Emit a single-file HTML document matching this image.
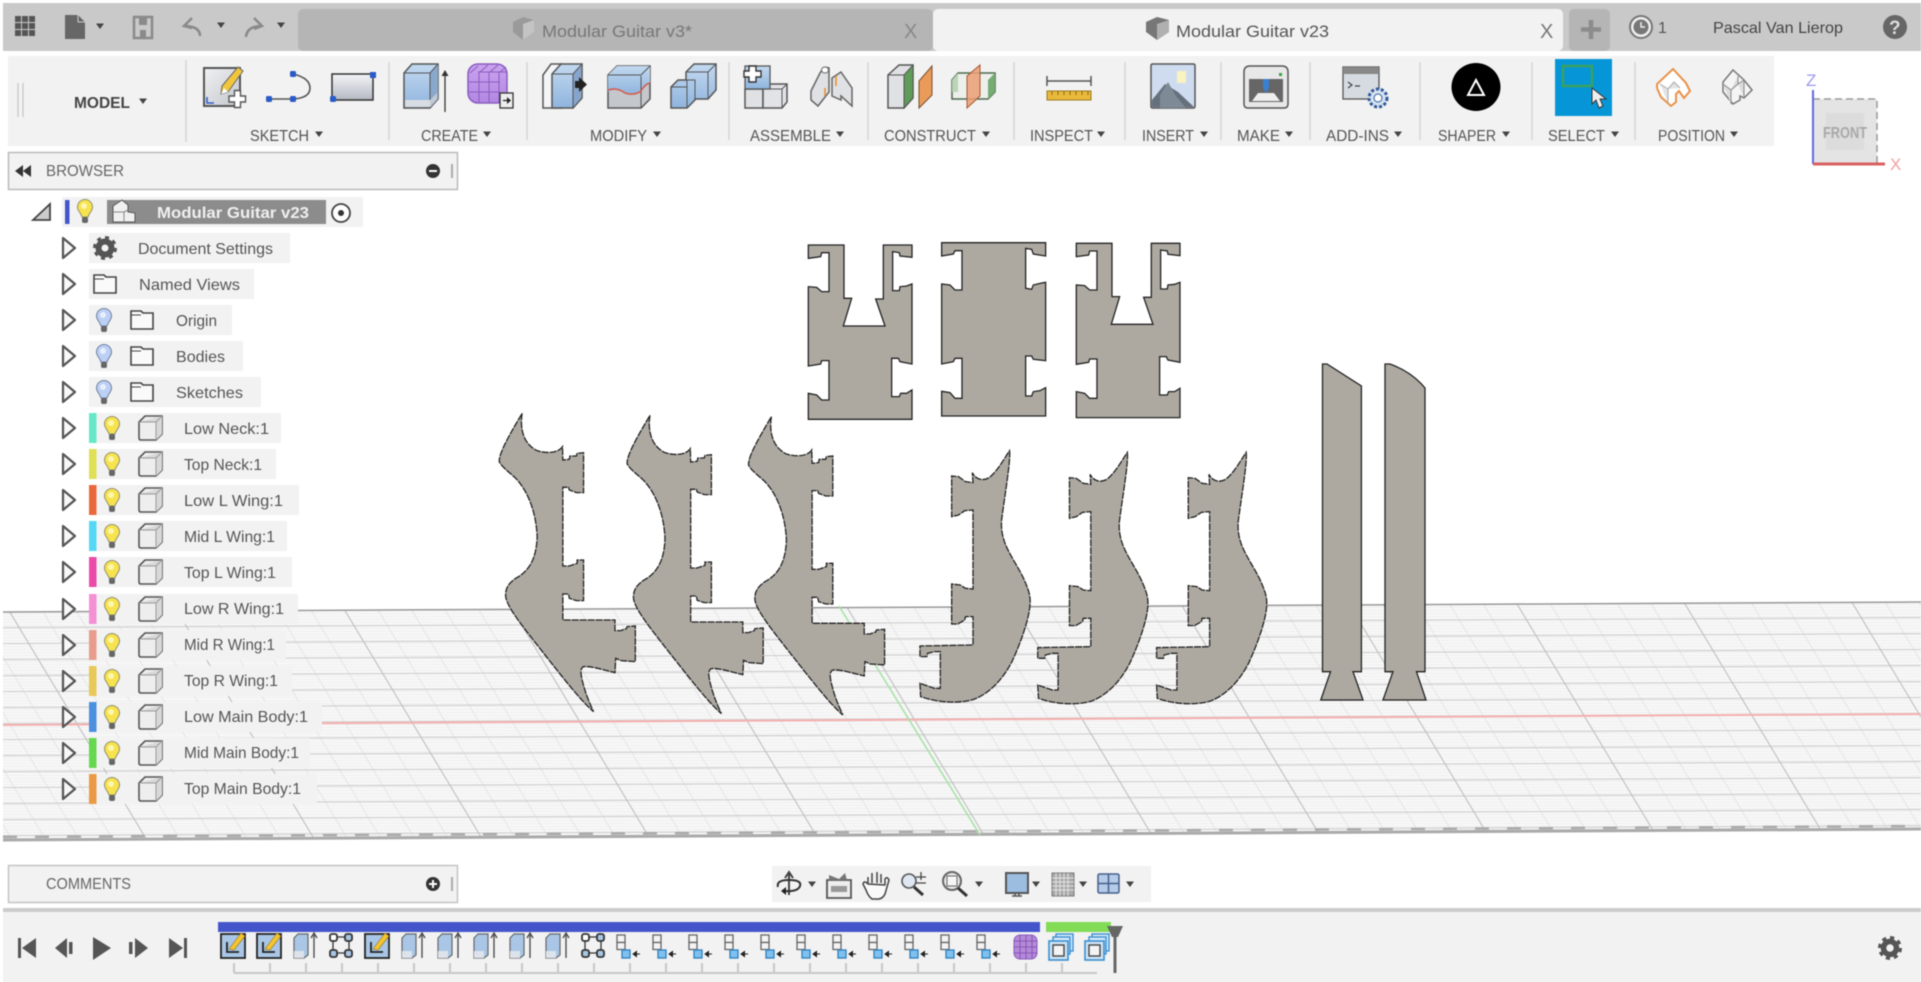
<!DOCTYPE html>
<html><head><meta charset="utf-8"><title>Modular Guitar v23</title>
<style>
html,body{margin:0;padding:0;background:#fff;width:1921px;height:982px;overflow:hidden}
svg{display:block;filter:blur(.45px);font-family:"Liberation Sans",sans-serif}
.s{vector-effect:non-scaling-stroke}
text{fill:#555}
</style></head><body>
<svg width="1921" height="982" viewBox="0 0 1921 982" xmlns="http://www.w3.org/2000/svg">
<defs>
<linearGradient id="rg" x1="0" y1="0" x2="0" y2="1"><stop offset="0" stop-color="#f4f5f7"/><stop offset="1" stop-color="#b4b9c2"/></linearGradient>
<linearGradient id="bl" x1="0" y1="0" x2="0" y2="1"><stop offset="0" stop-color="#c3d9f0"/><stop offset="1" stop-color="#8fb4de"/></linearGradient>
<linearGradient id="gr" x1="0" y1="0" x2="1" y2="1"><stop offset="0" stop-color="#f0f1f3"/><stop offset="1" stop-color="#c3c6cc"/></linearGradient>
<linearGradient id="pu" x1="0" y1="0" x2="0" y2="1"><stop offset="0" stop-color="#c9a4ee"/><stop offset="1" stop-color="#b286e2"/></linearGradient>
<pattern id="ph" width="10" height="3" patternUnits="userSpaceOnUse"><rect y="1" width="10" height="1" fill="#efefef"/></pattern>
<pattern id="ph2" width="10" height="16" patternUnits="userSpaceOnUse" patternTransform="translate(0,611) rotate(-.3)"><rect y="0" width="10" height="1.200" fill="#d0d0d0"/></pattern>
<pattern id="pd" width="33.600" height="20" patternUnits="userSpaceOnUse" patternTransform="translate(1517,605) skewX(31)"><rect width="1" height="20" fill="#e2e2e2"/></pattern>
<pattern id="pd2" width="168" height="20" patternUnits="userSpaceOnUse" patternTransform="translate(1517,605) skewX(31)"><rect width="1.200" height="20" fill="#bdbdbd"/></pattern>
<g id="bulb"><path d="M-3,6C-4,2-7.500,0-7.500-4A7.500,7.500 0 1 1 7.500-4C7.500,0 4,2 3,6Z" fill="#f7e34e" stroke="#8f8f70"/><circle cx="-1" cy="-5" r="3" fill="#fdf6b0"/><rect x="-3" y="6" width="6" height="6" rx="2" fill="#666"/></g>
<g id="bulbb"><path d="M-3,6C-4,2-7.500,0-7.500-4A7.500,7.500 0 1 1 7.500-4C7.500,0 4,2 3,6Z" fill="#bcd0f5" stroke="#6f7f9f"/><circle cx="-1" cy="-5" r="3" fill="#e8effc"/><rect x="-3" y="6" width="6" height="6" rx="2" fill="#666"/></g>
<g id="cube"><path d="M-11-6L-5-12H12V6L6,12H-9Q-11,12-11,10Z" fill="#eee" stroke="#555" stroke-width="1.600"/><path d="M-11-6H6V12L12,6V-12Z" fill="#d8d8d8" stroke="none"/><path d="M-11-6H6V12M6-6L12-12" fill="none" stroke="#999"/></g>
<g id="folder"><path d="M-11-9H-1L1-7H11V9H-11Z" fill="#fafafa" stroke="#444" stroke-width="1.600"/><path d="M-11-5H-1" stroke="#444" fill="none"/></g>
<path id="exp" d="M-6-10L6,0-6,10Z" fill="#f8f8f8" stroke="#555" stroke-width="2.200" stroke-linejoin="round"/>
<path id="dd" d="M-4-2.500H4L0,3Z" fill="#444"/>
<path id="wingL" class="s" d="M118,40C112,80 118,130 160,152C190,162 220,158 231,140L232,180L250,178L252,168L270,168L272,160L290,158L290,278L270,278L250,270L248,262L232,262L232,498L250,498L272,490L272,480L290,480L290,602L270,602L250,595L248,582L232,582L232,660L378,660L378,692L394,692L410,686L412,680L435,678L435,785L395,782L380,775L378,818C340,808 310,798 290,800C280,805 282,820 286,840C295,880 305,905 318,935C280,900 230,830 160,735C120,680 75,620 72,590C70,565 80,550 100,535C135,515 158,480 160,410C158,350 140,280 100,235C80,215 60,200 54,185C52,160 85,100 118,40Z"/>
<path id="wingR" class="s" d="M318,92C322,120 305,220 295,300C293,330 298,350 305,370C320,410 350,450 365,490C373,510 378,525 378,545C378,590 350,670 325,725C295,785 255,822 215,838C170,852 110,848 60,830L58,790L80,798L100,805L117,805L117,695L100,695L80,700L78,710L58,710L58,678L212,675L212,590L190,590L188,600L168,612L150,612L150,492L175,495L190,505L212,507L212,270L188,272L170,285L150,290L150,168L170,170L190,185L212,188L210,158C220,178 240,185 260,172C285,150 300,120 318,92Z"/>
<path id="partU" class="s" d="M85,45H192V205H215L190,288H315L287,207H310V45H396V82L360,78L358,68L338,65V182L358,182L360,170L380,168L396,162V402L360,395L355,385H335V500L358,500L362,490L380,490L396,480V568H85V490L110,495L125,510H147V392H125L122,402L85,408V170L110,172L125,185H147V68H125L122,80L85,85Z"/>
<g id="tsk"><rect x="-12" y="-11" width="24" height="24" fill="#a9c6e6" stroke="#222" stroke-width="1.800"/><path d="M-6-3V7H6" fill="none" stroke="#222" stroke-width="1.800"/><path d="M-4,4L8-12L12-9L1,5Z" fill="#f4c430" stroke="#8a7020" stroke-width=".6"/></g>
<g id="tex"><path d="M-11-7L-7-11H3V10L-1,13H-11Z" fill="#a9c6e6" stroke="#666" stroke-width="1.200"/><path d="M-11,6H-1V13H-11Z" fill="#dde3ea"/><path d="M9,13V-10M6-7L9-12L12-7" fill="none" stroke="#444" stroke-width="1.300"/></g>
<g id="tpa"><g fill="#fff" stroke="#333" stroke-width="1.800"><rect x="-11" y="-11" width="7" height="7" rx="2"/><rect x="4" y="-11" width="7" height="7" rx="2" fill="#a9c6e6"/><rect x="-11" y="5" width="7" height="7" rx="2" fill="#a9c6e6"/><rect x="4" y="5" width="7" height="7" rx="2" fill="#a9c6e6"/></g><path d="M-4-8H4M-8-4V5M-4,8H4M8-4V5" stroke="#333" stroke-width="1.300" fill="none"/></g>
<g id="tjo"><rect x="-12" y="-10" width="8" height="7.500" fill="#f4f4f4" stroke="#666" stroke-width="1.300"/><rect x="-12" y="-2.500" width="8" height="7" fill="#f4f4f4" stroke="#666" stroke-width="1.300"/><rect x="-7" y="5" width="8" height="8" fill="#7fc1ee" stroke="#2d7fc0" stroke-width="1.300"/><path d="M4,9H11M4,9L7.500,6.500V11.500Z" stroke="#222" fill="#222"/></g>
<g id="tco"><rect x="-4" y="-13" width="17" height="17" fill="#d9ebf9" stroke="#3a8fd0" stroke-width="1.400"/><rect x="-7" y="-10" width="17" height="17" fill="#d9ebf9" stroke="#3a8fd0" stroke-width="1.400"/><rect x="-11" y="-6" width="19" height="19" fill="#cfe4f5" stroke="#3a8fd0" stroke-width="1.600"/><rect x="-7" y="-2" width="11" height="11" fill="#f4f4f4" stroke="#444" stroke-width="1.400"/></g>
</defs>

<!-- viewport floor -->
<polygon points="3,612 1921,602 1921,830 3,841" fill="#f8f8f8"/>
<clipPath id="fc"><polygon points="3,612 1921,602 1921,830 3,841"/></clipPath>
<g clip-path="url(#fc)">
<rect x="0" y="600" width="1921" height="245" fill="url(#ph)"/>
<rect x="0" y="600" width="1921" height="245" fill="url(#pd)"/>
<rect x="0" y="600" width="1921" height="245" fill="url(#ph2)"/>
<rect x="0" y="600" width="1921" height="245" fill="url(#pd2)"/>
</g>
<path d="M3,612L1921,602" stroke="#999" stroke-width="1.500"/>
<path d="M3,840L1921,829" stroke="#aaa" stroke-width="3"/>
<path d="M3,837L1921,826" stroke="#aaa" stroke-width="2.500" stroke-dasharray="14 18"/>
<path d="M3,725L1921,714" stroke="#f5b0b0" stroke-width="2"/>
<path d="M839,606L980,835" stroke="#a8e2a8" stroke-width="1.600"/>

<!-- top parts -->
<g transform="translate(780,230) scale(.3333)" fill="#ada9a1" stroke="#222" stroke-width="1.300">
<use href="#partU"/>
<path class="s" d="M485,38H797V78L760,72L755,58L737,55V175L755,178L760,165L780,160L797,157V392L760,388L755,378L737,378V498L755,498L760,485L780,482L797,473V558H485V484L510,488L525,505L546,505V385L525,385L520,395L485,402V162L510,165L525,180L546,180V62L525,62L520,72L485,78Z"/>
<use href="#partU" x="804" y="-5"/>
</g>
<!-- left wings -->
<g transform="translate(480,400) scale(.3571,.3333)" fill="#ada9a1" stroke="#222" stroke-width="1.300" stroke-dasharray="7 1">
<use href="#wingL"/><use href="#wingL" x="358" y="6"/><use href="#wingL" x="698" y="10"/>
</g>
<!-- right wings -->
<g transform="translate(900,420) scale(.3444,.3333)" fill="#ada9a1" stroke="#222" stroke-width="1.300" stroke-dasharray="7 1">
<use href="#wingR"/><use href="#wingR" x="342" y="5"/><use href="#wingR" x="687" y="5"/>
</g>
<!-- neck bars -->
<path d="M1322.500,364H1327L1361.400,386V671.700H1353L1363,700H1320.800L1330.500,671.700H1322.500Z" fill="#ada9a1" stroke="#222" stroke-width="1.300"/>
<path d="M1385,364H1390Q1412,372 1425,388V671.700H1416.500L1426,700H1383L1393,671.700H1385Z" fill="#ada9a1" stroke="#222" stroke-width="1.300"/>

<!-- top bar -->
<rect x="3" y="3" width="1918" height="48" fill="#c9c9c9"/>
<rect x="298" y="9" width="635" height="42" rx="5" fill="#b5b5b5"/>
<rect x="933" y="9" width="630" height="42" rx="5" fill="#f2f2f2"/>
<rect x="1569" y="9" width="41" height="42" rx="5" fill="#b5b5b5"/>
<g fill="#555"><rect x="15" y="16" width="6" height="6"/><rect x="22" y="16" width="6" height="6"/><rect x="29" y="16" width="6" height="6"/><rect x="15" y="23" width="6" height="6"/><rect x="22" y="23" width="6" height="6"/><rect x="29" y="23" width="6" height="6"/><rect x="15" y="30" width="6" height="6"/><rect x="22" y="30" width="6" height="6"/><rect x="29" y="30" width="6" height="6"/></g>
<path d="M65,15H78L85,22V39H65Z" fill="#666"/><path d="M78,15V22H85" fill="none" stroke="#ccc"/>
<use href="#dd" x="100" y="26"/>
<path d="M134,17H152V38H134Z" fill="none" stroke="#8a8a8a" stroke-width="2.500"/><rect x="139" y="17" width="8" height="8" fill="#8a8a8a"/><rect x="140" y="30" width="6" height="8" fill="#8a8a8a"/>
<path d="M192,18L184,26L192,28M184,26Q200,26 200,36" fill="none" stroke="#8a8a8a" stroke-width="2.500"/>
<use href="#dd" x="221" y="25"/>
<path d="M254,18L262,26L254,29M262,26Q247,26 246,37" fill="none" stroke="#8a8a8a" stroke-width="2.500"/>
<use href="#dd" x="281" y="25"/>
<path d="M513,22L523,17L534,20V32L523,40L513,32Z" fill="#9a9a9a"/><path d="M523,24V40L534,32V20Z" fill="#c4c4c4"/>
<text x="542" y="37" font-size="17" textLength="150" lengthAdjust="spacingAndGlyphs" style="fill:#777">Modular Guitar v3*</text>
<text x="904" y="38" font-size="20" style="fill:#888">X</text>
<path d="M1146,22L1157,17L1169,20V32L1157,40L1146,32Z" fill="#777"/><path d="M1157,24V40L1169,32V20Z" fill="#b0b0b0"/>
<text x="1176" y="37" font-size="17" textLength="153" lengthAdjust="spacingAndGlyphs">Modular Guitar v23</text>
<text x="1540" y="38" font-size="20" style="fill:#777">X</text>
<path d="M1591,20V39M1581,29.500H1601" stroke="#8c8c8c" stroke-width="4.500"/>
<circle cx="1641" cy="27" r="11" fill="#eee" stroke="#777" stroke-width="2"/><circle cx="1641" cy="27" r="7.500" fill="#777"/><path d="M1641,22V27H1645" stroke="#eee" fill="none" stroke-width="1.500"/>
<text x="1658" y="33" font-size="16">1</text>
<text x="1713" y="33" font-size="16" textLength="130" lengthAdjust="spacingAndGlyphs" style="fill:#444">Pascal Van Lierop</text>
<circle cx="1895" cy="27" r="12" fill="#666"/><text x="1889" y="34" font-size="19" font-weight="bold" style="fill:#ddd">?</text>

<!-- toolbar -->
<rect x="8" y="56" width="1766" height="90" fill="#f2f2f2"/>
<path d="M18,83V117M23,83V117" stroke="#c4c4c4" stroke-width="1.200"/>
<path d="M186,60V142M389,62V140M527,62V140M729,62V140M868,62V140M1014,62V140M1125,62V140M1221,62V140M1310,62V140M1420,62V140M1532,62V140M1635,62V140" stroke="#d6d6d6" stroke-width="1.500"/>
<text x="74" y="108" font-size="16" font-weight="bold" textLength="56" lengthAdjust="spacingAndGlyphs" style="fill:#444">MODEL</text><use href="#dd" x="143" y="101"/>
<text x="250" y="141" font-size="16" textLength="59" lengthAdjust="spacingAndGlyphs">SKETCH</text><use href="#dd" x="319" y="134"/>
<text x="421" y="141" font-size="16" textLength="57" lengthAdjust="spacingAndGlyphs">CREATE</text><use href="#dd" x="487" y="134"/>
<text x="590" y="141" font-size="16" textLength="57" lengthAdjust="spacingAndGlyphs">MODIFY</text><use href="#dd" x="657" y="134"/>
<text x="750" y="141" font-size="16" textLength="81" lengthAdjust="spacingAndGlyphs">ASSEMBLE</text><use href="#dd" x="840" y="134"/>
<text x="884" y="141" font-size="16" textLength="92" lengthAdjust="spacingAndGlyphs">CONSTRUCT</text><use href="#dd" x="986" y="134"/>
<text x="1030" y="141" font-size="16" textLength="63" lengthAdjust="spacingAndGlyphs">INSPECT</text><use href="#dd" x="1101" y="134"/>
<text x="1142" y="141" font-size="16" textLength="52" lengthAdjust="spacingAndGlyphs">INSERT</text><use href="#dd" x="1204" y="134"/>
<text x="1237" y="141" font-size="16" textLength="43" lengthAdjust="spacingAndGlyphs">MAKE</text><use href="#dd" x="1289" y="134"/>
<text x="1326" y="141" font-size="16" textLength="63" lengthAdjust="spacingAndGlyphs">ADD-INS</text><use href="#dd" x="1398" y="134"/>
<text x="1438" y="141" font-size="16" textLength="58" lengthAdjust="spacingAndGlyphs">SHAPER</text><use href="#dd" x="1506" y="134"/>
<text x="1548" y="141" font-size="16" textLength="57" lengthAdjust="spacingAndGlyphs">SELECT</text><use href="#dd" x="1615" y="134"/>
<text x="1658" y="141" font-size="16" textLength="67" lengthAdjust="spacingAndGlyphs">POSITION</text><use href="#dd" x="1734" y="134"/>
<!-- sketch icons -->
<rect x="204" y="68" width="36" height="38" fill="url(#gr)" stroke="#555" stroke-width="2"/>
<path d="M207,97V103H214" stroke="#3060c8" stroke-width="1.600" fill="none"/>
<path d="M222,86L238,67L243,71L228,92L221,94Z" fill="#f2c63c" stroke="#666"/><path d="M221,94L224,88L228,92Z" fill="#fff"/>
<path d="M229,96H234.500V90.500H240.500V96H245.500V102H240.500V107.500H234.500V102H229Z" fill="#fff" stroke="#555" stroke-width="1.400"/>
<path d="M269,99H293M293,74Q310,78 310,88Q310,98 293,99" fill="none" stroke="#555" stroke-width="1.600"/>
<g fill="#2a5ac8"><rect x="266" y="96" width="6" height="6" rx="1.500"/><rect x="290" y="96" width="6" height="6" rx="1.500"/><rect x="290" y="71" width="6" height="6" rx="1.500"/></g>
<rect x="332" y="74" width="41" height="26" fill="url(#rg)" stroke="#333" stroke-width="1.500"/>
<rect x="370" y="72" width="6" height="6" fill="#2a5ac8"/><rect x="330" y="96" width="6" height="6" rx="1.500" fill="#2a5ac8"/>
<!-- create -->
<path d="M404,73L412,64H438V99L430,108H404Z" fill="url(#bl)" stroke="#555" stroke-width="1.500"/><path d="M430,73L438,64V99L430,108Z" fill="#8aa8cc"/><path d="M404,73H430V108M430,73L438,64" fill="none" stroke="#555"/><path d="M405,100H430V107H405Z" fill="#d8dde3"/><path d="M430,100L437,93V99L430,107Z" fill="#c4c9d0"/>
<path d="M445,112V71" stroke="#333" stroke-width="1.300"/><path d="M441.500,76L445,70L448.500,76Z" fill="#333"/>
<rect x="468" y="64" width="39" height="39" rx="10" fill="url(#pu)" stroke="#8a5cc0" stroke-width="1.500"/>
<path d="M470,73L478,66M480,72L488,65M490,72L498,65M478,72H506M469,82H500M469,92H500M479,72V102M489,72V102M499,72V102M500,72L506,67" stroke="#8a5cc0" stroke-width="1" fill="none"/>
<rect x="500" y="93" width="13" height="15" fill="#eee" stroke="#333" stroke-width="1.300"/><path d="M503,100.500H508" stroke="#222" stroke-width="1.300"/><path d="M507,97L511,100.500L507,104Z" fill="#222"/>
<!-- modify -->
<path d="M543,75L551,64H562V108H543Z" fill="#f4f5f7" stroke="#555" stroke-width="1.500"/>
<path d="M552,74L561,64H582V98L573,108H552Z" fill="url(#bl)" stroke="#555" stroke-width="1.500"/><path d="M573,74L582,64V98L573,108Z" fill="#87a5cb" stroke="#555"/><path d="M552,74H573" stroke="#555"/>
<rect x="575" y="81" width="5" height="7" fill="#222"/><path d="M579,77L587,84.500L579,92Z" fill="#222"/>
<path d="M608,75L617,66H650V99L641,108H608Z" fill="#c4c7cc" stroke="#555" stroke-width="1.500"/>
<path d="M608,75L617,66H650V83Q645,84 641,90Q632,97 625,93Q615,87 608,92Z" fill="url(#bl)"/>
<path d="M641,76V108M608,75H641L650,66" fill="none" stroke="#555"/><path d="M608,90Q617,87 625,93Q634,96 641,91Q645,84 650,83" fill="none" stroke="#d85a48" stroke-width="1.500"/>
<path d="M671,87L678,80H686V72L694,64H716V90L708,99H695V100L687,108H671Z" fill="url(#bl)" stroke="#555" stroke-width="1.500"/><path d="M671,87H687V108M687,87V80M686,80H695V99M686,72H708V99M708,72L716,64" fill="none" stroke="#555" stroke-width="1"/>
<!-- assemble -->
<path d="M745,89H763V108H745Z" fill="#dfe1e4" stroke="#555" stroke-width="1.500"/><path d="M763,89L769,84H787V102L782,108H763Z" fill="#e1e3e6" stroke="#555" stroke-width="1.500"/><path d="M763,89H782V108M782,89L787,84" fill="none" stroke="#555"/>
<rect x="745" y="66" width="25" height="23" fill="url(#bl)" stroke="#555" stroke-width="1.300"/>
<path d="M744,71H749V66H756V71H761V77H756V82H749V77H744Z" fill="#fff" stroke="#333" stroke-width="1.400"/>
<path d="M811,91L820,73Q824,66 829,68V92L818,106L811,100Z" fill="#dfe1e4" stroke="#666" stroke-width="1.500"/><ellipse cx="825" cy="70" rx="3.500" ry="3" fill="#fff" stroke="#666"/>
<path d="M832,78L841,72L852,88V106L841,96V100L832,96Z" fill="#dfe1e4" stroke="#666" stroke-width="1.500"/><path d="M825,88V96M836,76V86" stroke="#e8922e" stroke-width="1.600"/>
<!-- construct -->
<path d="M888,75L899,65H913V98L904,108H888Z" fill="#dfe1e4" stroke="#555" stroke-width="1.500"/><path d="M904,75L913,65V98L904,108Z" fill="#5f9c5a" stroke="#555"/><path d="M888,75H904" stroke="#555"/>
<path d="M919,81L932,66V95L919,108Z" fill="#ea9b5a" stroke="#7a5030"/>
<path d="M952,80L958,73H995V92L988,99H952Z" fill="#ecefec" stroke="#4c6a4c" stroke-width="1.500"/><path d="M988,80L995,73V92L988,99Z" fill="#76ab72"/><path d="M952,80L958,73V92H952Z" fill="#b9d4b6"/>
<path d="M967,76L980,65V96L967,108Z" fill="#eb9f76" fill-opacity=".85" stroke="#a8562f"/>
<!-- inspect -->
<path d="M1047,81H1091M1047,76V86M1091,76V86" stroke="#555" stroke-width="1.500" fill="none"/>
<rect x="1047" y="91" width="44" height="9" fill="#e9b93c" stroke="#9a7a20"/><path d="M1052,91V95M1058,91V95M1064,91V95M1070,91V95M1076,91V95M1082,91V95M1088,91V95" stroke="#8a6a10"/>
<!-- insert -->
<rect x="1151" y="64" width="44" height="44" rx="1.500" fill="#cfdcf0" stroke="#555" stroke-width="1.500"/>
<path d="M1152,100L1165,84L1178,92L1194,107H1152Z" fill="#66707c"/><path d="M1160,95L1168,82L1176,96L1186,108H1160Z" fill="#7e8a96"/><rect x="1177" y="71" width="9" height="12" fill="#f8f3c0"/>
<!-- make -->
<path d="M1244,72Q1244,66 1250,66H1282Q1288,66 1288,72V104Q1288,108 1284,108H1248Q1244,108 1244,104Z" fill="#e8e8e8" stroke="#555" stroke-width="1.500"/><rect x="1249" y="79" width="34" height="23" fill="#666"/><path d="M1263,79H1269V88L1266,93L1263,88Z" fill="#3a7fd0"/><path d="M1252,101L1258,93H1274L1280,101Z" fill="#eee"/><rect x="1279" y="73" width="3" height="3" fill="#3aa040"/>
<!-- add-ins -->
<rect x="1343" y="67" width="36" height="32" fill="#d6dbe2" stroke="#555" stroke-width="1.300"/><rect x="1343" y="67" width="36" height="7" fill="#888"/><path d="M1348,82L1352,85L1348,88M1355,86H1360" stroke="#444" fill="none" stroke-width="1.200"/>
<circle cx="1378" cy="98" r="9" fill="#d6e2f2" stroke="#2f5a9a" stroke-width="3" stroke-dasharray="3 2"/><circle cx="1378" cy="98" r="4" fill="#fff" stroke="#2f5a9a"/>
<!-- shaper -->
<ellipse cx="1476" cy="87" rx="24.500" ry="24" fill="#000"/><path d="M1476,80L1484,95H1468Z" fill="none" stroke="#fff" stroke-width="2"/>
<!-- select -->
<rect x="1555" y="59" width="57" height="57" fill="#0696d7"/><rect x="1563" y="66" width="29" height="20" fill="none" stroke="#3aa060" stroke-width="2.500"/>
<path d="M1592,88V104L1596,100L1599,108L1603,106L1600,99L1606,99Z" fill="#eee" stroke="#333"/>
<!-- position -->
<path d="M1673,69L1686,83L1690,91L1684,98L1679,91L1676,94V102L1671,106L1661,97L1657,88V84Z" fill="#fff" stroke="#e8924a" stroke-width="2"/><path d="M1660,84L1668,89V103M1668,89L1674,82L1680,88" stroke="#aaa" fill="#e4e4e4"/>
<path d="M1733,70L1744,80L1752,90L1744,98L1740,96V100L1733,104L1723,92V82Z" fill="#f4f4f4" stroke="#777" stroke-width="1.500"/><path d="M1723,84L1731,90V104M1731,90L1738,84V76M1738,84L1744,80V98" stroke="#888" fill="#dcdcdc"/>
<!-- view cube -->
<rect x="1813" y="99" width="64" height="64" fill="#e4e4e4"/><path d="M1813,99H1877V163" fill="none" stroke="#9a9a9a" stroke-width="1.500" stroke-dasharray="7 4"/>
<rect x="1826" y="113" width="38" height="37" fill="#dcdcdc"/>
<text x="1823" y="138" font-size="16" font-weight="bold" textLength="44" lengthAdjust="spacingAndGlyphs" style="fill:#a8a8a8">FRONT</text>
<path d="M1813,90V164" stroke="#6666e0" stroke-width="2"/><path d="M1813,164H1885" stroke="#d86060" stroke-width="3"/>
<text x="1806" y="86" font-size="17" style="fill:#9a9af0">Z</text><text x="1890" y="170" font-size="17" style="fill:#f0a0a0">X</text>

<!-- browser -->
<rect x="8.500" y="152.500" width="449" height="37" fill="#f2f2f2" stroke="#bbb" stroke-width="1.500"/>
<path d="M23,165V177L15,171ZM31,165V177L23,171Z" fill="#333"/>
<text x="46" y="176" font-size="16" textLength="78" lengthAdjust="spacingAndGlyphs" style="fill:#666">BROWSER</text>
<circle cx="433" cy="171" r="7" fill="#333"/><rect x="429" y="170" width="8" height="2" fill="#fff"/><path d="M452,164V178" stroke="#aaa" stroke-width="2"/>

<g>
<rect x="62" y="197" width="301" height="30" fill="#f2f2f2"/>
<path d="M33,220L50,204V220Z" fill="#ccc" stroke="#444" stroke-width="1.800"/>
<rect x="65" y="200" width="4.500" height="24" fill="#4455cc"/>
<use href="#bulb" x="85" y="211"/>
<rect x="107" y="200" width="219" height="24" fill="#8c8c8c"/>
<path d="M113,206L122,200L128,205V212L135,213V222H113Z" fill="#f0f0f0" stroke="#555"/><path d="M113,212H124V222M124,212L128,210" stroke="#888" fill="none"/>
<text x="157" y="218" font-size="16" font-weight="bold" textLength="152" lengthAdjust="spacingAndGlyphs" style="fill:#f0f0f0">Modular Guitar v23</text>
<circle cx="341" cy="213" r="9" fill="#fff" stroke="#444" stroke-width="1.800"/><circle cx="341" cy="213" r="3" fill="#333"/>

<rect x="89" y="233" width="201" height="30" fill="#f2f2f2"/><use href="#exp" x="69" y="248"/>
<circle cx="105" cy="248" r="6.500" fill="none" stroke="#555" stroke-width="6"/><circle cx="105" cy="248" r="10.500" fill="none" stroke="#555" stroke-width="3" stroke-dasharray="4 4.200"/>
<text x="138" y="254" font-size="16" textLength="135" lengthAdjust="spacingAndGlyphs">Document Settings</text>

<rect x="89" y="269" width="165" height="30" fill="#f2f2f2"/><use href="#exp" x="69" y="284"/><use href="#folder" x="105" y="284"/>
<text x="139" y="290" font-size="16" textLength="101" lengthAdjust="spacingAndGlyphs">Named Views</text>

<rect x="89" y="305" width="143" height="30" fill="#f2f2f2"/><use href="#exp" x="69" y="320"/><use href="#bulbb" x="104" y="320"/><use href="#folder" x="142" y="320"/>
<text x="176" y="326" font-size="16" textLength="41" lengthAdjust="spacingAndGlyphs">Origin</text>

<rect x="89" y="341" width="154" height="30" fill="#f2f2f2"/><use href="#exp" x="69" y="356"/><use href="#bulbb" x="104" y="356"/><use href="#folder" x="142" y="356"/>
<text x="176" y="362" font-size="16" textLength="49" lengthAdjust="spacingAndGlyphs">Bodies</text>

<rect x="89" y="377" width="172" height="30" fill="#f2f2f2"/><use href="#exp" x="69" y="392"/><use href="#bulbb" x="104" y="392"/><use href="#folder" x="142" y="392"/>
<text x="176" y="398" font-size="16" textLength="67" lengthAdjust="spacingAndGlyphs">Sketches</text>

<rect x="89" y="413" width="192" height="30" fill="#f2f2f2"/><use href="#exp" x="69" y="428"/><rect x="89" y="413" width="7.500" height="30" fill="#66e8c8"/><use href="#bulb" x="112" y="428"/><use href="#cube" x="150" y="428"/>
<text x="184" y="434" font-size="16" textLength="85" lengthAdjust="spacingAndGlyphs">Low Neck:1</text>

<rect x="89" y="449" width="187" height="30" fill="#f2f2f2"/><use href="#exp" x="69" y="464"/><rect x="89" y="449" width="7.500" height="30" fill="#dfe055"/><use href="#bulb" x="112" y="464"/><use href="#cube" x="150" y="464"/>
<text x="184" y="470" font-size="16" textLength="78" lengthAdjust="spacingAndGlyphs">Top Neck:1</text>

<rect x="89" y="485" width="210" height="30" fill="#f2f2f2"/><use href="#exp" x="69" y="500"/><rect x="89" y="485" width="7.500" height="30" fill="#e8683c"/><use href="#bulb" x="112" y="500"/><use href="#cube" x="150" y="500"/>
<text x="184" y="506" font-size="16" textLength="99" lengthAdjust="spacingAndGlyphs">Low L Wing:1</text>

<rect x="89" y="521" width="198" height="30" fill="#f2f2f2"/><use href="#exp" x="69" y="536"/><rect x="89" y="521" width="7.500" height="30" fill="#55d8f4"/><use href="#bulb" x="112" y="536"/><use href="#cube" x="150" y="536"/>
<text x="184" y="542" font-size="16" textLength="91" lengthAdjust="spacingAndGlyphs">Mid L Wing:1</text>

<rect x="89" y="557" width="203" height="30" fill="#f2f2f2"/><use href="#exp" x="69" y="572"/><rect x="89" y="557" width="7.500" height="30" fill="#ea4aa8"/><use href="#bulb" x="112" y="572"/><use href="#cube" x="150" y="572"/>
<text x="184" y="578" font-size="16" textLength="92" lengthAdjust="spacingAndGlyphs">Top L Wing:1</text>

<rect x="89" y="594" width="209" height="30" fill="#f2f2f2"/><use href="#exp" x="69" y="609"/><rect x="89" y="594" width="7.500" height="30" fill="#f490d4"/><use href="#bulb" x="112" y="609"/><use href="#cube" x="150" y="609"/>
<text x="184" y="614" font-size="16" textLength="100" lengthAdjust="spacingAndGlyphs">Low R Wing:1</text>

<rect x="89" y="630" width="197" height="30" fill="#f2f2f2"/><use href="#exp" x="69" y="645"/><rect x="89" y="630" width="7.500" height="30" fill="#e89c8c"/><use href="#bulb" x="112" y="645"/><use href="#cube" x="150" y="645"/>
<text x="184" y="650" font-size="16" textLength="91" lengthAdjust="spacingAndGlyphs">Mid R Wing:1</text>

<rect x="89" y="666" width="203" height="30" fill="#f2f2f2"/><use href="#exp" x="69" y="681"/><rect x="89" y="666" width="7.500" height="30" fill="#e8c858"/><use href="#bulb" x="112" y="681"/><use href="#cube" x="150" y="681"/>
<text x="184" y="686" font-size="16" textLength="94" lengthAdjust="spacingAndGlyphs">Top R Wing:1</text>

<rect x="89" y="702" width="233" height="30" fill="#f2f2f2"/><use href="#exp" x="69" y="717"/><rect x="89" y="702" width="7.500" height="30" fill="#4c90e0"/><use href="#bulb" x="112" y="717"/><use href="#cube" x="150" y="717"/>
<text x="184" y="722" font-size="16" textLength="124" lengthAdjust="spacingAndGlyphs">Low Main Body:1</text>

<rect x="89" y="738" width="221" height="30" fill="#f2f2f2"/><use href="#exp" x="69" y="753"/><rect x="89" y="738" width="7.500" height="30" fill="#66d850"/><use href="#bulb" x="112" y="753"/><use href="#cube" x="150" y="753"/>
<text x="184" y="758" font-size="16" textLength="115" lengthAdjust="spacingAndGlyphs">Mid Main Body:1</text>

<rect x="89" y="774" width="228" height="30" fill="#f2f2f2"/><use href="#exp" x="69" y="789"/><rect x="89" y="774" width="7.500" height="30" fill="#ea9a44"/><use href="#bulb" x="112" y="789"/><use href="#cube" x="150" y="789"/>
<text x="184" y="794" font-size="16" textLength="117" lengthAdjust="spacingAndGlyphs">Top Main Body:1</text>
</g>

<!-- comments -->
<rect x="8.500" y="865.500" width="449" height="37" fill="#f2f2f2" stroke="#c4c4c4" stroke-width="1.500"/>
<text x="46" y="889" font-size="16" textLength="85" lengthAdjust="spacingAndGlyphs" style="fill:#666">COMMENTS</text>
<circle cx="433" cy="884" r="7" fill="#333"/><path d="M429,884H437M433,880V888" stroke="#fff" stroke-width="2"/><path d="M452,877V891" stroke="#aaa" stroke-width="2"/>

<!-- view bar -->
<rect x="772" y="866" width="379" height="36" fill="#f2f2f2"/>
<path d="M789,873V895M785,878L789,872L793,878" fill="none" stroke="#444" stroke-width="2"/><path d="M778,887Q776,880 789,880Q802,880 800,886Q798,892 784,891" fill="none" stroke="#333" stroke-width="2"/><path d="M786,887L781,891L786,895Z" fill="#222"/>
<use href="#dd" x="812" y="884"/>
<path d="M827,880H851V898H827Z" fill="#eee" stroke="#555" stroke-width="1.800"/><rect x="831" y="886" width="16" height="6" fill="#999"/><path d="M829,880L829,875L839,879L845,873L847,880" fill="#777"/>
<path d="M868,884V877M872,883V873M877,883V872M881,883V874M885,885V879Q887,876 889,880L885,894Q882,900 876,899H872Q868,896 866,890L863,884Q864,880 868,884Z" fill="#fafafa" stroke="#444" stroke-width="1.500" stroke-linejoin="round"/>
<circle cx="909" cy="881" r="7" fill="#dfe8f2" stroke="#555" stroke-width="1.600"/><path d="M914,887L923,895" stroke="#333" stroke-width="3"/><path d="M916,877H926M921,872V880M916,883H926" stroke="#444" stroke-width="1.300" fill="none"/>
<circle cx="952" cy="881" r="9" fill="#e6e6e6" stroke="#666" stroke-width="2"/><rect x="947" y="876" width="10" height="10" fill="#f6f6f6" stroke="#666"/><path d="M958,888L967,896" stroke="#333" stroke-width="3"/>
<use href="#dd" x="979" y="884"/>
<rect x="1006" y="873" width="22" height="20" fill="#9cbce0" stroke="#555" stroke-width="2"/><path d="M1012,896H1022M1015,893V896M1019,893V896" stroke="#555" stroke-width="1.500"/>
<use href="#dd" x="1036" y="884"/>
<rect x="1052" y="873" width="22" height="23" fill="#aaa" stroke="#777"/><path d="M1056,873V896M1060,873V896M1064,873V896M1068,873V896M1052,878H1074M1052,882H1074M1052,886H1074M1052,890H1074" stroke="#f2f2f2" stroke-width=".7"/>
<use href="#dd" x="1083" y="884"/>
<rect x="1098" y="874" width="21" height="19" rx="1.500" fill="#b6cbe8" stroke="#44608c" stroke-width="1.500"/><path d="M1108.500,874V893M1098,883.500H1119" stroke="#44608c" stroke-width="1.500"/>
<use href="#dd" x="1130" y="884"/>

<!-- timeline -->
<rect x="3" y="908" width="1918" height="4" fill="#ccc"/>
<rect x="3" y="912" width="1918" height="70" fill="#f2f2f2"/>
<g fill="#555">
<rect x="18" y="938" width="3" height="20"/><path d="M36,938V958L22,948Z"/>
<path d="M55,948L67,938V958Z"/><rect x="69" y="942" width="3.500" height="12"/>
<path d="M93,937L111,948L93,960Z"/>
<rect x="129" y="942" width="3.500" height="12"/><path d="M135,938L148,948L135,958Z"/>
<path d="M169,938L183,948L169,958Z"/><rect x="184" y="938" width="3" height="20"/>
</g>
<rect x="218" y="922" width="822" height="10" fill="#4455cc"/>
<rect x="1046" y="922" width="65" height="10" fill="#82dc55"/>
<path d="M234,973H1097M234,963V973M270,963V973M306,963V973M342,963V973M378,963V973M414,963V973M450,963V973M486,963V973M522,963V973M558,963V973M594,963V973M630,963V973M666,963V973M702,963V973M738,963V973M774,963V973M810,963V973M846,963V973M882,963V973M918,963V973M954,963V973M990,963V973M1026,963V973M1062,963V973" stroke="#c8c8c8" stroke-width="2" fill="none"/>
<use href="#tsk" x="233" y="945"/><use href="#tsk" x="269" y="945"/><use href="#tex" x="305" y="945"/><use href="#tpa" x="341" y="945"/><use href="#tsk" x="377" y="945"/>
<use href="#tex" x="413" y="945"/><use href="#tex" x="449" y="945"/><use href="#tex" x="485" y="945"/><use href="#tex" x="521" y="945"/><use href="#tex" x="557" y="945"/><use href="#tpa" x="593" y="945"/>
<use href="#tjo" x="629" y="945"/><use href="#tjo" x="665" y="945"/><use href="#tjo" x="701" y="945"/><use href="#tjo" x="737" y="945"/><use href="#tjo" x="773" y="945"/><use href="#tjo" x="809" y="945"/><use href="#tjo" x="845" y="945"/><use href="#tjo" x="881" y="945"/><use href="#tjo" x="917" y="945"/><use href="#tjo" x="953" y="945"/><use href="#tjo" x="989" y="945"/>
<rect x="1014" y="935" width="23" height="24" rx="6" fill="#b48ad8" stroke="#8a5cc0"/><path d="M1014,941H1037M1014,947H1037M1014,953H1037M1020,935V959M1026,935V959M1032,935V959" stroke="#7d4ab0" stroke-width=".8"/>
<use href="#tco" x="1060" y="947"/><use href="#tco" x="1096" y="947"/>
<path d="M1107,926H1123L1118,937H1112Z" fill="#666"/><rect x="1113.500" y="930" width="3" height="43" fill="#666"/>
<g transform="translate(1890,948)"><circle r="6.500" fill="none" stroke="#555" stroke-width="5.500"/><circle r="10.500" fill="none" stroke="#555" stroke-width="3" stroke-dasharray="4.200 4"/></g>
</svg>
</body></html>
